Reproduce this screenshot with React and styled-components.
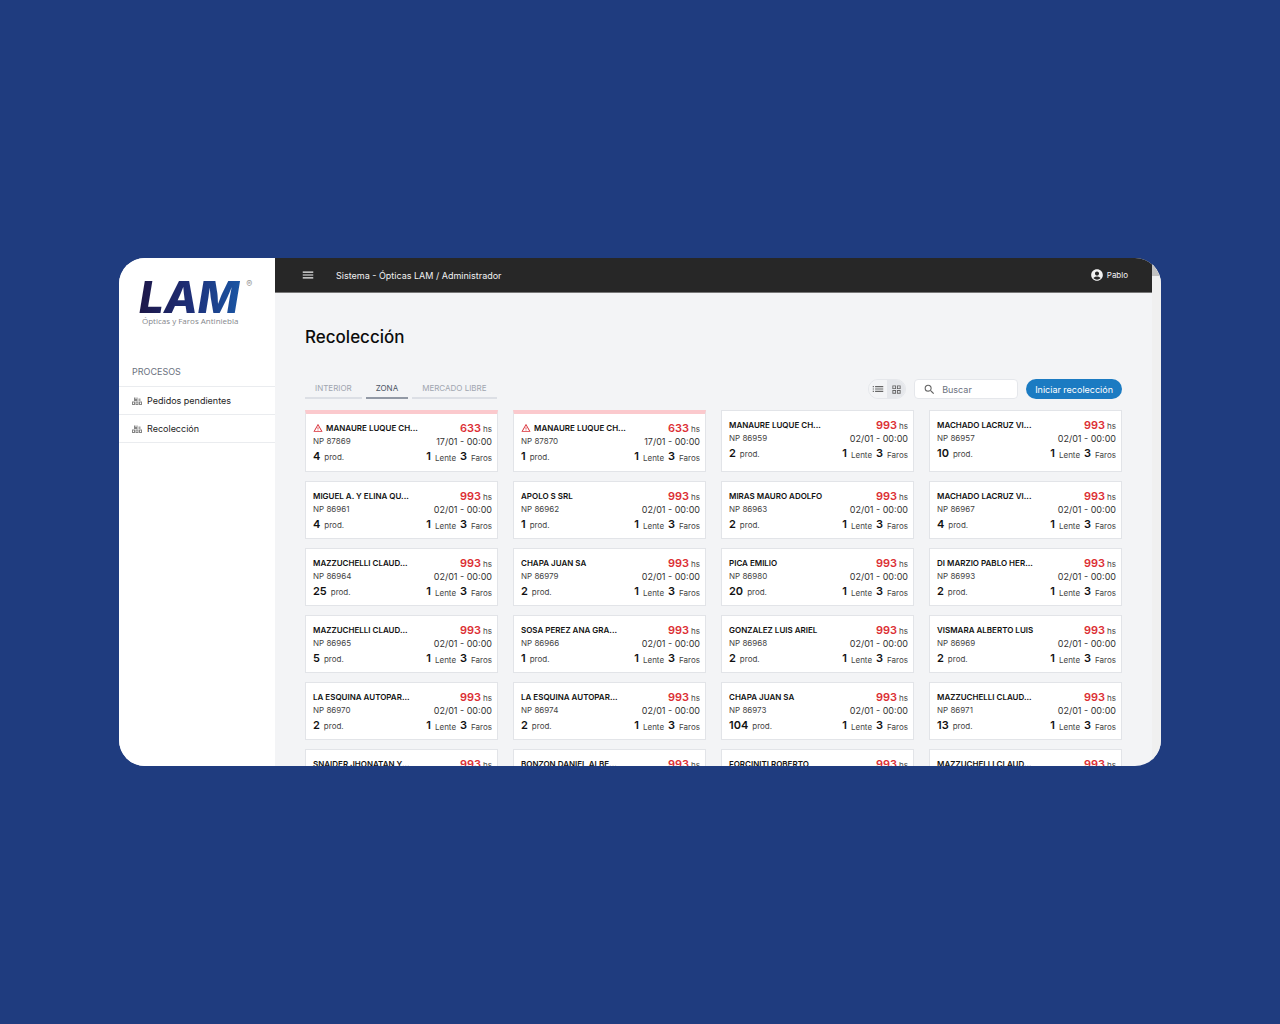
import React, { useState } from "react";
import styled, { createGlobalStyle } from "styled-components";
import {
  MdMenu,
  MdAccountCircle,
  MdSearch,
  MdList,
  MdOutlineGridView,
  MdWarningAmber,
} from "react-icons/md";

const GlobalStyle = createGlobalStyle`
  *, *::before, *::after { box-sizing: border-box; }
  body {
    margin: 0;
    background: #1f3c7f;
    font-family: Inter, "Liberation Sans", sans-serif;
    color: #111;
  }
  button, input { font-family: inherit; }
  h1, h2, p, ul { margin: 0; padding: 0; }
`;

const Stage = styled.div`
  display: grid;
  height: 100vh;
  padding: 258px 119px;
`;

const Panel = styled.div`
  display: flex;
  min-height: 0;
  overflow: hidden;
  border-radius: 26px;
  background: #f3f4f6;
`;

const Sidebar = styled.aside`
  flex: 0 0 156px;
  background: #fff;
`;

const Brand = styled.div`
  display: flex;
  flex-direction: column;
  height: 100px;
  padding: 21px 20px 0;
`;

const BrandRow = styled.div`
  display: flex;
  align-items: flex-start;
  gap: 4px;
`;

const BrandName = styled.span`
  padding-right: 3px;
  font-size: 44px;
  line-height: 37px;
  font-weight: 800;
  font-style: italic;
  color: transparent;
  background: linear-gradient(90deg, #1d1748 0%, #1e2f78 50%, #1a57a5 100%);
  background-clip: text;
`;

const Registered = styled.span`
  font-size: 9px;
  line-height: 9px;
  color: #999;
`;

const Tagline = styled.span`
  padding-left: 3px;
  font-family: "Open Sans", sans-serif;
  font-size: 8px;
  line-height: 10px;
  white-space: nowrap;
  color: #85878c;
`;

const NavTitle = styled.h2`
  padding: 0 13px;
  font-size: 9px;
  line-height: 28px;
  font-weight: 400;
  color: #6b7280;
`;

const NavList = styled.ul`
  list-style: none;
  border-top: 1px solid #eaecef;
`;

const NavLink = styled.a`
  display: flex;
  align-items: center;
  gap: 5px;
  height: 28px;
  padding: 0 13px;
  border-bottom: 1px solid #eaecef;
  font-size: 9px;
  color: #222;
  text-decoration: none;
  svg { color: #858585; }
`;

const Main = styled.div`
  flex: 1;
  min-width: 0;
`;

const TopBar = styled.header`
  display: flex;
  align-items: center;
  height: 35px;
  padding: 0 24px 0 26px;
  border-bottom: 1px solid #777;
  background: #272727;
  color: #f2f2f2;
`;

const IconButton = styled.button`
  display: flex;
  padding: 0;
  border: 0;
  background: none;
  color: inherit;
`;

const Crumb = styled.span`
  margin-left: 21px;
  font-size: 9px;
`;

const User = styled.div`
  display: flex;
  align-items: center;
  gap: 3px;
  margin-left: auto;
  font-size: 8px;
`;

const Content = styled.main`
  padding: 31px 30px 0;
`;

const Title = styled.h1`
  font-size: 17px;
  line-height: 26px;
  font-weight: 500;
  color: #0c0c0c;
`;

const Toolbar = styled.div`
  display: flex;
  align-items: center;
  justify-content: space-between;
  margin: 29px 0 11px;
`;

const Group = styled.div`
  display: flex;
  gap: 8px;
`;

const Tabs = styled.div`
  display: flex;
  gap: 4px;
`;

const Tab = styled.button`
  height: 20px;
  padding: 0 10px;
  border: 0;
  border-bottom: ${(p) => (p.$active ? "2px solid #9299a5" : "2px solid #dcdfe5")};
  background: none;
  font-size: 8px;
  color: ${(p) => (p.$active ? "#4b5563" : "#a0a5af")};
`;

const Toggle = styled.div`
  display: flex;
  overflow: hidden;
  height: 20px;
  border: 1px solid #e5e7eb;
  border-radius: 10px;
`;

const ToggleButton = styled.button`
  display: flex;
  align-items: center;
  justify-content: center;
  width: 18px;
  padding: 0;
  border: 0;
  background: ${(p) => (p.$active ? "#e5e7eb" : "#f3f4f6")};
  color: #666;
`;

const Search = styled.label`
  display: flex;
  align-items: center;
  gap: 6px;
  width: 104px;
  height: 20px;
  padding: 0 8px;
  border: 1px solid #e5e7eb;
  border-radius: 4px;
  background: #fff;
  color: #666;
  svg { flex: none; }
`;

const SearchInput = styled.input`
  min-width: 0;
  width: 100%;
  padding: 0;
  border: 0;
  outline: 0;
  background: none;
  font-size: 9px;
  &::placeholder { color: #6b7280; opacity: 1; }
`;

const Primary = styled.button`
  height: 20px;
  padding: 0 9px;
  border: 0;
  border-radius: 10px;
  background: #1b7bc2;
  font-size: 9px;
  color: #fff;
`;

const Grid = styled.div`
  display: grid;
  grid-template-columns: repeat(4, 1fr);
  gap: 9px 15px;
`;

const Card = styled.article`
  display: flex;
  justify-content: space-between;
  padding: ${(p) => (p.$alert ? "7px 5px 6px 7px" : "7px 5px 5px 7px")};
  border: 1px solid #e2e4e8;
  border-top: ${(p) => (p.$alert ? "4px solid #fbc9cd" : "1px solid #e2e4e8")};
  background: #fff;
  white-space: nowrap;
`;

const Left = styled.div`
  display: grid;
  grid-template-rows: 14px 12px 18px;
  align-content: start;
  align-items: center;
`;

const Right = styled.div`
  display: grid;
  grid-template-rows: 14px 13px 16px;
  align-content: start;
  align-items: center;
  justify-items: end;
`;

const Client = styled.h2`
  display: flex;
  align-items: center;
  gap: 3px;
  font-size: 8px;
  font-weight: 600;
  color: #111;
  svg { color: #d93038; }
`;

const Small = styled.span`
  font-size: 8px;
  line-height: 10px;
  color: #444;
`;

const DateText = styled.span`
  font-size: 9px;
  color: #333;
`;

const Line = styled.p`
  display: flex;
  align-items: ${(p) => p.$align || "baseline"};
  gap: ${(p) => p.$gap || 4}px;
`;

const Count = styled.span`
  font-size: 11px;
  line-height: 14px;
  font-weight: 600;
  color: #111;
`;

const Hours = styled(Count)`
  color: #dc2f35;
`;

const Scrollbar = styled.div`
  flex: 0 0 9px;
  background: #f0f0f0;
`;

const Thumb = styled.div`
  height: 18px;
  background: #c1c1c1;
`;

const orders = [
  ["MANAURE LUQUE CH...", 87869, 4, true],
  ["MANAURE LUQUE CH...", 87870, 1, true],
  ["MANAURE LUQUE CH...", 86959, 2],
  ["MACHADO LACRUZ VI...", 86957, 10],
  ["MIGUEL A. Y ELINA QU...", 86961, 4],
  ["APOLO S SRL", 86962, 1],
  ["MIRAS MAURO ADOLFO", 86963, 2],
  ["MACHADO LACRUZ VI...", 86967, 4],
  ["MAZZUCHELLI CLAUD...", 86964, 25],
  ["CHAPA JUAN SA", 86979, 2],
  ["PICA EMILIO", 86980, 20],
  ["DI MARZIO PABLO HER...", 86993, 2],
  ["MAZZUCHELLI CLAUD...", 86965, 5],
  ["SOSA PEREZ ANA GRA...", 86966, 1],
  ["GONZALEZ LUIS ARIEL", 86968, 2],
  ["VISMARA ALBERTO LUIS", 86969, 2],
  ["LA ESQUINA AUTOPAR...", 86970, 2],
  ["LA ESQUINA AUTOPAR...", 86974, 2],
  ["CHAPA JUAN SA", 86973, 104],
  ["MAZZUCHELLI CLAUD...", 86971, 13],
  ["SNAIDER JHONATAN Y...", 86972, 1],
  ["BONZON DANIEL ALBE...", 86975, 2],
  ["FORCINITI ROBERTO", 86976, 3],
  ["MAZZUCHELLI CLAUD...", 86977, 2],
];

function StackIcon() {
  return (
    <svg width="10" height="8" viewBox="0 0 20 16" fill="currentColor" aria-hidden="true">
      <path d="M4 1h3v3h2V1h2v7H4z" />
      <path d="M13 3h4v5h-4z" opacity=".75" />
      <path
        fillRule="evenodd"
        d="M0 9h6v7H0zM2 11v3h2v-3zM7 9h6v7H7zM9 11v3h2v-3zM14 9h6v7h-6zM16 11v3h2v-3z"
      />
    </svg>
  );
}

function OrderCard({ client, np, count, alert }) {
  return (
    <Card $alert={alert}>
      <Left>
        <Client>
          {alert && <MdWarningAmber size={10} />}
          {client}
        </Client>
        <Small>NP {np}</Small>
        <Line>
          <Count>{count}</Count>
          <Small>prod.</Small>
        </Line>
      </Left>
      <Right>
        <Line $gap={2}>
          <Hours>{alert ? 633 : 993}</Hours>
          <Small>hs</Small>
        </Line>
        <DateText>{alert ? "17/01" : "02/01"} - 00:00</DateText>
        <Line $align="flex-end">
          <Count>1</Count>
          <Small>Lente</Small>
          <Count>3</Count>
          <Small>Faros</Small>
        </Line>
      </Right>
    </Card>
  );
}

export default function App() {
  const [tab, setTab] = useState("ZONA");
  const [view, setView] = useState("grid");
  return (
    <>
      <GlobalStyle />
      <Stage>
        <Panel>
          <Sidebar>
            <Brand>
              <BrandRow>
                <BrandName>LAM</BrandName>
                <Registered>®</Registered>
              </BrandRow>
              <Tagline>Ópticas y Faros Antiniebla</Tagline>
            </Brand>
            <nav aria-label="Procesos">
              <NavTitle>PROCESOS</NavTitle>
              <NavList>
                {["Pedidos pendientes", "Recolección"].map((name) => (
                  <li key={name}>
                    <NavLink href="#">
                      <StackIcon />
                      {name}
                    </NavLink>
                  </li>
                ))}
              </NavList>
            </nav>
          </Sidebar>
          <Main>
            <TopBar>
              <IconButton aria-label="Menú">
                <MdMenu size={14} />
              </IconButton>
              <Crumb>Sistema - Ópticas LAM / Administrador</Crumb>
              <User>
                <MdAccountCircle size={14} />
                Pablo
              </User>
            </TopBar>
            <Content>
              <Title>Recolección</Title>
              <Toolbar>
                <Tabs role="tablist">
                  {["INTERIOR", "ZONA", "MERCADO LIBRE"].map((name) => (
                    <Tab
                      key={name}
                      role="tab"
                      aria-selected={tab === name}
                      $active={tab === name}
                      onClick={() => setTab(name)}
                    >
                      {name}
                    </Tab>
                  ))}
                </Tabs>
                <Group>
                  <Toggle>
                    <ToggleButton
                      aria-label="Lista"
                      $active={view === "list"}
                      onClick={() => setView("list")}
                    >
                      <MdList size={14} />
                    </ToggleButton>
                    <ToggleButton
                      aria-label="Cuadrícula"
                      $active={view === "grid"}
                      onClick={() => setView("grid")}
                    >
                      <MdOutlineGridView size={11} />
                    </ToggleButton>
                  </Toggle>
                  <Search>
                    <MdSearch size={13} />
                    <SearchInput aria-label="Buscar" placeholder="Buscar" />
                  </Search>
                  <Primary>Iniciar recolección</Primary>
                </Group>
              </Toolbar>
              <Grid>
                {orders.map(([client, np, count, alert]) => (
                  <OrderCard
                    key={np}
                    client={client}
                    np={np}
                    count={count}
                    alert={alert}
                  />
                ))}
              </Grid>
            </Content>
          </Main>
          <Scrollbar>
            <Thumb />
          </Scrollbar>
        </Panel>
      </Stage>
    </>
  );
}
